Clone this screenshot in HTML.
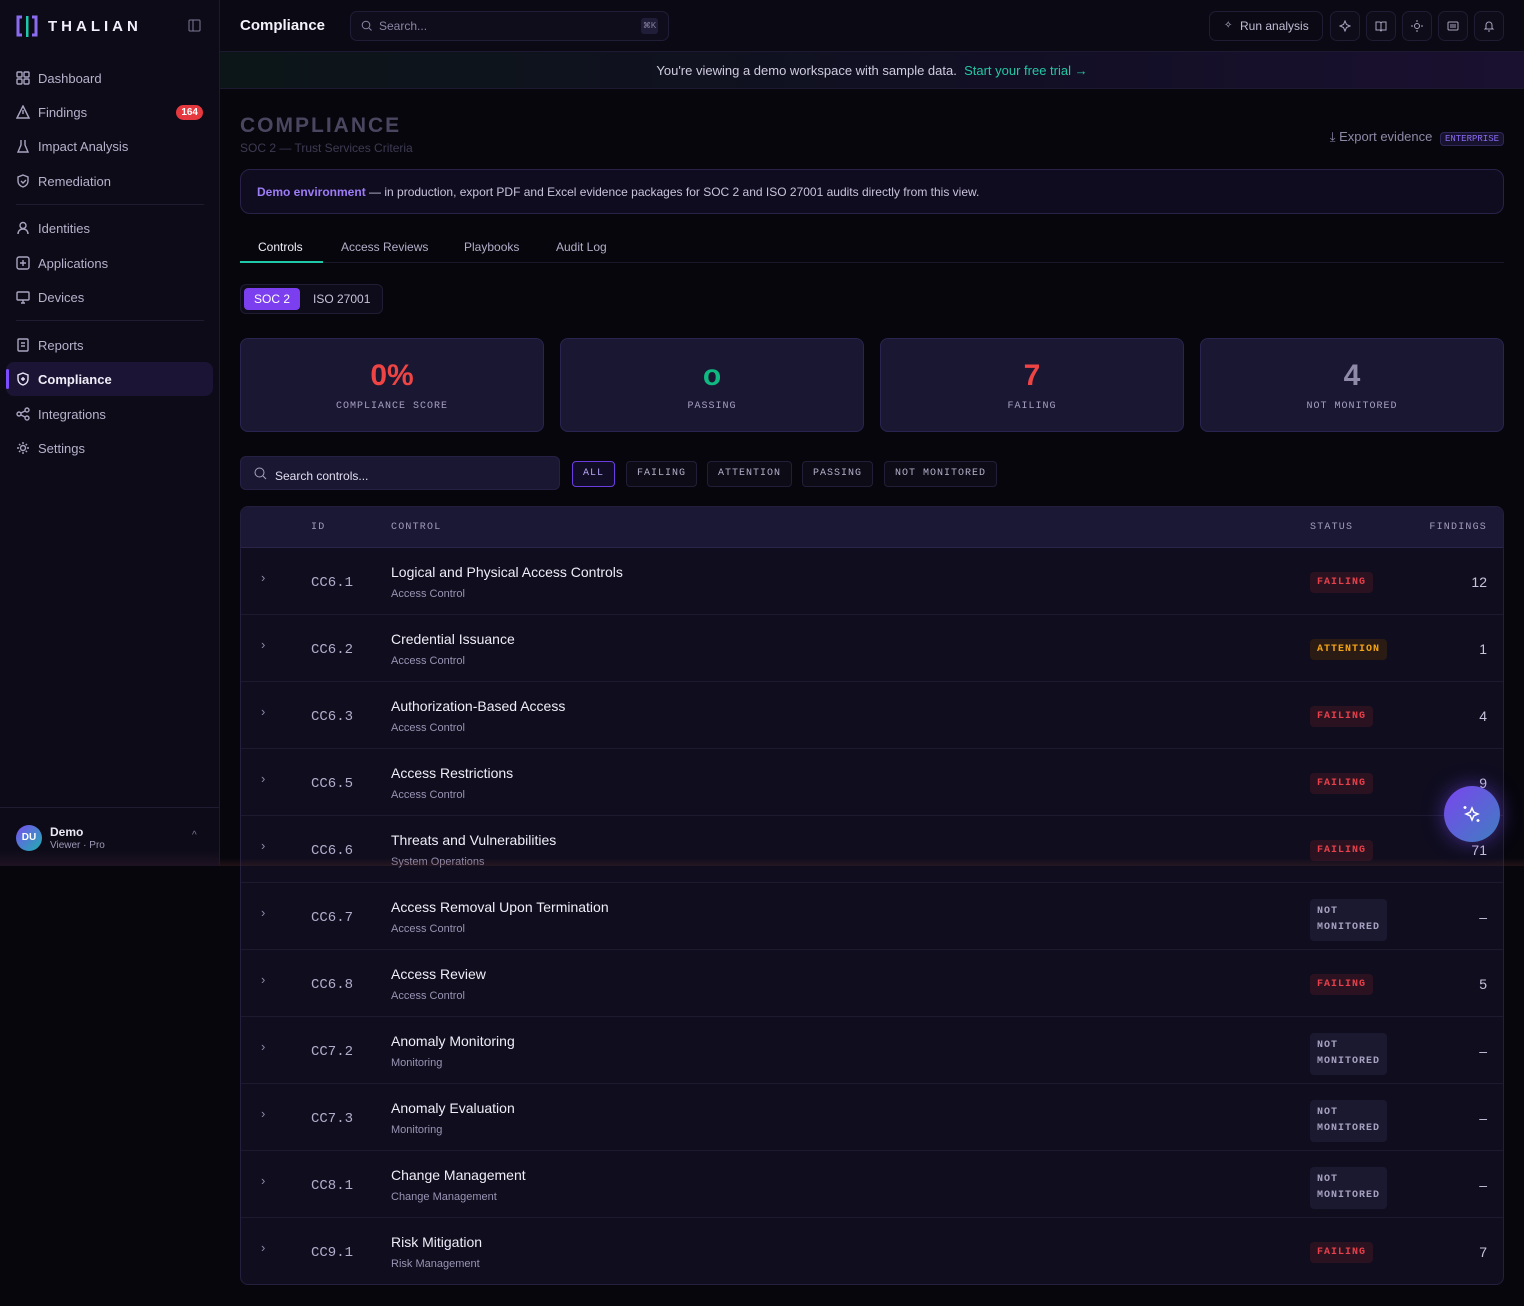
<!DOCTYPE html>
<html><head><meta charset="utf-8"><style>
*{box-sizing:border-box;margin:0;padding:0}
body{width:1524px;height:1306px;background:#07060d;font-family:"Liberation Sans",sans-serif;color:#d8d4ea;position:relative;overflow:hidden}
.mono{font-family:"Liberation Mono",monospace}
.side{position:absolute;left:0;top:0;width:220px;height:866px;background:#0d0b18;border-right:1px solid #1c1930}
.logo{position:absolute;left:16px;top:14px;height:24px;display:flex;align-items:center;gap:10px}
.logo b{font-size:15px;letter-spacing:4px;color:#f2f0fa}
.nav{position:absolute;left:6px;width:207px;height:34px;display:flex;align-items:center;padding-left:10px;font-size:13px;color:#b7b2cc;gap:8px}
.nav svg{width:14px;height:14px;stroke:#a9a4c0;fill:none;stroke-width:1.4}
.nav.act{background:#1c1434;border-radius:8px;color:#f1eef9;font-weight:bold}
.nav.act:before{content:"";position:absolute;left:0;top:7px;width:3px;height:20px;background:#7c4dff;border-radius:2px}
.sep{position:absolute;left:16px;width:188px;height:1px;background:#1f1c32}
.top{position:absolute;left:220px;top:0;right:0;height:52px;border-bottom:1px solid #1c1930;background:#0b0a14}
.banner{position:absolute;left:220px;top:52px;right:0;height:37px;background:linear-gradient(90deg,#0c1618,#120f24 60%,#1a1030);border-bottom:1px solid #1c1930;font-size:13px;color:#d0cce0;text-align:center;line-height:37px}
.ib{position:absolute;top:11px;width:30px;height:30px;border:1px solid #1f1c34;border-radius:7px;background:#0d0c18}
.card{position:absolute;top:338px;width:304px;height:94px;background:#1a1733;border:1px solid #2a2550;border-radius:8px;text-align:center}
.card .v{font-size:30px;font-weight:bold;margin-top:20px;height:36px}
.card .l{font-size:10px;letter-spacing:1px;color:#a6a0c0;margin-top:6px}
.chip{position:absolute;top:461px;height:26px;border:1px solid #221e38;border-radius:4px;font-size:10px;letter-spacing:1px;color:#b5b0cc;line-height:24px;padding:0 10px;background:#0c0b16}
.tbl{position:absolute;left:240px;top:506px;width:1264px;height:779px;border:1px solid #231f3c;border-radius:8px;overflow:hidden;background:#0f0d1e}
.th{height:41px;background:#1b1836;border-bottom:1px solid #2a2548;position:relative;font-size:10px;letter-spacing:1.2px;color:#a29dbb}
.th span{position:absolute;top:15px}
.row{height:67px;border-bottom:1px solid #1d1a30;position:relative}
.row .ch{position:absolute;left:20px;top:22px;color:#8e89a8;font-size:13px}
.row .id{position:absolute;left:70px;top:27px;font-size:14px;color:#b3adcc}
.row .n{position:absolute;left:150px;top:16px;font-size:14px;color:#f0edf8}
.row .c{position:absolute;left:150px;top:40px;font-size:11px;color:#9a94b4}
.row .s{position:absolute;left:1069px;top:24px;font-size:10px;letter-spacing:1px;border-radius:4px;padding:5px 7px;font-weight:bold}
.row .f{position:absolute;right:16px;top:26px;font-size:14px;color:#c8c3dc}
.fail{background:#2a1221;color:#e8404a}
.att{background:#2a1c14;color:#f4a416}
.nm{background:#1b1930;color:#a8a2c2;line-height:16px;top:16px!important}
</style></head><body>
<div class="side">
 <div class="logo"><svg width="22" height="22" viewBox="0 0 22 22"><path d="M6 2H2v18h4" stroke="#8b6cf0" stroke-width="3" fill="none"/><path d="M16 2h4v18h-4" stroke="#8b6cf0" stroke-width="3" fill="none"/><rect x="10" y="1" width="2.5" height="21" fill="#1ec8a8"/></svg><b>THALIAN</b></div>
 <svg style="position:absolute;left:188px;top:19px" width="13" height="13" viewBox="0 0 13 13" fill="none" stroke="#7d7898"><rect x="1" y="1" width="11" height="11" rx="1"/><path d="M5 1v11"/></svg>
 <div class="nav" style="top:61px"><svg viewBox="0 0 14 14"><rect x="1" y="1" width="5" height="5" rx="1"/><rect x="8" y="1" width="5" height="5" rx="1"/><rect x="1" y="8" width="5" height="5" rx="1"/><rect x="8" y="8" width="5" height="5" rx="1"/></svg>Dashboard</div>
 <div class="nav" style="top:95px"><svg viewBox="0 0 14 14"><path d="M7 1L13 13H1z M7 5v4"/></svg>Findings<span style="position:absolute;right:10px;background:#e5383f;color:#fff;font-size:10px;font-weight:bold;border-radius:8px;padding:2px 5px">164</span></div>
 <div class="nav" style="top:129px"><svg viewBox="0 0 14 14"><path d="M5 1v5L2 13h10L9 6V1"/></svg>Impact Analysis</div>
 <div class="nav" style="top:164px"><svg viewBox="0 0 14 14"><path d="M7 1l5 2v4c0 3-2 5-5 6-3-1-5-3-5-6V3z M5 7l2 2 3-3"/></svg>Remediation</div>
 <div class="sep" style="top:204px"></div>
 <div class="nav" style="top:211px"><svg viewBox="0 0 14 14"><circle cx="7" cy="4.5" r="3"/><path d="M2 13c0-3 2-5 5-5s5 2 5 5"/></svg>Identities</div>
 <div class="nav" style="top:246px"><svg viewBox="0 0 14 14"><rect x="1" y="1" width="12" height="12" rx="2"/><path d="M7 4v6M4 7h6"/></svg>Applications</div>
 <div class="nav" style="top:280px"><svg viewBox="0 0 14 14"><rect x="1" y="2" width="12" height="8" rx="1"/><path d="M5 13h4M7 10v3"/></svg>Devices</div>
 <div class="sep" style="top:320px"></div>
 <div class="nav" style="top:328px"><svg viewBox="0 0 14 14"><rect x="2" y="1" width="10" height="12" rx="1"/><path d="M5 5h4M5 8h4"/></svg>Reports</div>
 <div class="nav act" style="top:362px"><svg viewBox="0 0 14 14" style="stroke:#e8e4f4"><path d="M7 1l5 2v4c0 3-2 5-5 6-3-1-5-3-5-6V3z M7 5v4M5 7h4"/></svg>Compliance</div>
 <div class="nav" style="top:397px"><svg viewBox="0 0 14 14"><circle cx="3" cy="7" r="2"/><circle cx="11" cy="3" r="2"/><circle cx="11" cy="11" r="2"/><path d="M5 6l4-2M5 8l4 2"/></svg>Integrations</div>
 <div class="nav" style="top:431px"><svg viewBox="0 0 14 14"><circle cx="7" cy="7" r="2.5"/><path d="M7 1v2M7 11v2M1 7h2M11 7h2M3 3l1.3 1.3M9.7 9.7L11 11M3 11l1.3-1.3M9.7 4.3L11 3"/></svg>Settings</div>
 <div style="position:absolute;left:0;right:0;top:807px;height:1px;background:#1f1c32"></div>
 <div style="position:absolute;left:16px;top:825px;width:26px;height:26px;border-radius:50%;background:linear-gradient(135deg,#7a4ef0,#1eb0b0);color:#fff;font-size:10px;font-weight:bold;text-align:center;line-height:26px">DU</div>
 <div style="position:absolute;left:50px;top:825px;font-size:12px;font-weight:bold;color:#ece9f6">Demo</div>
 <div style="position:absolute;left:50px;top:840px;font-size:10px;color:#9e99b6">Viewer · Pro</div>
 <div style="position:absolute;left:192px;top:830px;font-size:10px;color:#7d7898">^</div>
 <div style="position:absolute;left:0;right:0;top:850px;height:16px;background:linear-gradient(180deg,transparent,#1e1222)"></div>
</div>
<div class="top">
 <div style="position:absolute;left:20px;top:17px;font-size:15px;font-weight:bold;color:#f4f2fb">Compliance</div>
 <div style="position:absolute;left:130px;top:11px;width:319px;height:30px;border:1px solid #201d36;border-radius:7px;background:#0f0d1c;font-size:12px;color:#8a85a3;line-height:28px;padding-left:28px">Search...
  <svg style="position:absolute;left:10px;top:8px" width="11" height="11" viewBox="0 0 11 11" fill="none" stroke="#8a85a3"><circle cx="5" cy="5" r="3.8"/><path d="M8 8l2.5 2.5"/></svg>
  <span style="position:absolute;right:10px;top:6px;height:16px;width:17px;background:#201d38;border-radius:3px;font-size:8px;line-height:16px;text-align:center">⌘K</span></div>
 <div style="position:absolute;left:989px;top:11px;width:114px;height:30px;border:1px solid #1f1c34;border-radius:7px;font-size:12px;color:#c0bbd4;line-height:28px;padding-left:30px"><span style="position:absolute;left:14px;font-size:10px">✧</span>Run analysis</div>
</div>
<div class="ib" style="left:1330px"></div><div class="ib" style="left:1366px"></div><div class="ib" style="left:1402px"></div><div class="ib" style="left:1438px"></div><div class="ib" style="left:1474px"></div>
<svg style="position:absolute;left:1339px;top:20px" width="12" height="12" fill="none" stroke="#a9a4c0"><path d="M6 1l1.5 3.5L11 6 7.5 7.5 6 11 4.5 7.5 1 6l3.5-1.5z"/></svg>
<svg style="position:absolute;left:1375px;top:20px" width="12" height="12" fill="none" stroke="#a9a4c0"><path d="M1 2h4l1 1 1-1h4v8H7l-1 1-1-1H1zM6 3v8"/></svg>
<svg style="position:absolute;left:1411px;top:20px" width="12" height="12" fill="none" stroke="#a9a4c0"><circle cx="6" cy="6" r="2.5"/><path d="M6 0v2M6 10v2M0 6h2M10 6h2"/></svg>
<svg style="position:absolute;left:1447px;top:20px" width="12" height="12" fill="none" stroke="#a9a4c0"><rect x="1" y="2" width="10" height="8" rx="1"/><path d="M3 5h6M3 7h6"/></svg>
<svg style="position:absolute;left:1483px;top:20px" width="12" height="12" fill="none" stroke="#a9a4c0"><path d="M3 8V5a3 3 0 016 0v3l1 1H2zM5 11h2"/></svg>
<div class="banner">You're viewing a demo workspace with sample data. &nbsp;<span style="color:#22c7a6">Start your free trial →</span></div>
<div style="position:absolute;left:240px;top:114px;font-size:21px;font-weight:bold;letter-spacing:2px;color:#4a4660">COMPLIANCE</div>
<div style="position:absolute;left:240px;top:141px;font-size:12px;color:#3e3b52">SOC 2 — Trust Services Criteria</div>
<div style="position:absolute;right:20px;top:129px;font-size:13px;color:#8e89a6;white-space:nowrap">⤓ Export evidence <span class="mono" style="font-size:9px;color:#8a6cf0;border:1px solid #2e2758;background:#17122e;border-radius:4px;padding:1px 4px;margin-left:4px">ENTERPRISE</span></div>
<div style="position:absolute;left:240px;top:169px;width:1264px;height:45px;border:1px solid #2a2148;border-radius:10px;background:#100c20;font-size:12px;color:#c8c3da;line-height:45px;padding-left:16px"><span style="color:#9d7cf7;font-weight:bold">Demo environment</span> — in production, export PDF and Excel evidence packages for SOC 2 and ISO 27001 audits directly from this view.</div>
<div style="position:absolute;left:240px;top:262px;width:1264px;height:1px;background:#1a1729"></div>
<div style="position:absolute;left:240px;top:261px;width:83px;height:2px;background:#1ec8a8"></div>
<div style="position:absolute;top:240px;left:258px;font-size:12px;color:#f0edf8">Controls</div>
<div style="position:absolute;top:240px;left:341px;font-size:12px;color:#b3aec8">Access Reviews</div>
<div style="position:absolute;top:240px;left:464px;font-size:12px;color:#b3aec8">Playbooks</div>
<div style="position:absolute;top:240px;left:556px;font-size:12px;color:#b3aec8">Audit Log</div>
<div style="position:absolute;left:240px;top:284px;width:143px;height:30px;border:1px solid #1f1c34;border-radius:6px;background:#0e0c1a"></div>
<div style="position:absolute;left:244px;top:288px;width:56px;height:22px;background:#7b3ff0;border-radius:4px;color:#fff;font-size:12px;text-align:center;line-height:22px">SOC 2</div>
<div style="position:absolute;left:313px;top:292px;font-size:12px;color:#c8c3da">ISO 27001</div>
<div class="card" style="left:240px"><div class="v" style="color:#ef4444">0%</div><div class="l mono">COMPLIANCE SCORE</div></div>
<div class="card" style="left:560px"><div class="v" style="color:#10b981">o</div><div class="l mono">PASSING</div></div>
<div class="card" style="left:880px"><div class="v" style="color:#ef4444">7</div><div class="l mono">FAILING</div></div>
<div class="card" style="left:1200px"><div class="v" style="color:#8f8aa8">4</div><div class="l mono">NOT MONITORED</div></div>
<div style="position:absolute;left:240px;top:456px;width:320px;height:34px;background:#1a1733;border:1px solid #262144;border-radius:6px;font-size:12px;color:#e0dcef;padding:12px 0 0 34px">Search controls...
<svg style="position:absolute;left:13px;top:10px" width="13" height="13" fill="none" stroke="#a9a4c0"><circle cx="5.5" cy="5.5" r="4.5"/><path d="M9 9l3 3"/></svg></div>
<div class="chip mono" style="left:572px;border-color:#6b3ce0;color:#b8a5f5;background:#120d26">ALL</div>
<div class="chip mono" style="left:626px">FAILING</div>
<div class="chip mono" style="left:707px">ATTENTION</div>
<div class="chip mono" style="left:802px">PASSING</div>
<div class="chip mono" style="left:884px">NOT MONITORED</div>
<div class="tbl">
 <div class="th mono"><span style="left:70px">ID</span><span style="left:150px">CONTROL</span><span style="left:1069px">STATUS</span><span style="right:16px">FINDINGS</span></div>
 <div class="row"><span class="ch">›</span><span class="id mono">CC6.1</span><span class="n">Logical and Physical Access Controls</span><span class="c">Access Control</span><span class="s mono fail">FAILING</span><span class="f">12</span></div>
 <div class="row"><span class="ch">›</span><span class="id mono">CC6.2</span><span class="n">Credential Issuance</span><span class="c">Access Control</span><span class="s mono att">ATTENTION</span><span class="f">1</span></div>
 <div class="row"><span class="ch">›</span><span class="id mono">CC6.3</span><span class="n">Authorization-Based Access</span><span class="c">Access Control</span><span class="s mono fail">FAILING</span><span class="f">4</span></div>
 <div class="row"><span class="ch">›</span><span class="id mono">CC6.5</span><span class="n">Access Restrictions</span><span class="c">Access Control</span><span class="s mono fail">FAILING</span><span class="f">9</span></div>
 <div class="row"><span class="ch">›</span><span class="id mono">CC6.6</span><span class="n">Threats and Vulnerabilities</span><span class="c">System Operations</span><span class="s mono fail">FAILING</span><span class="f">71</span></div>
 <div class="row"><span class="ch">›</span><span class="id mono">CC6.7</span><span class="n">Access Removal Upon Termination</span><span class="c">Access Control</span><span class="s mono nm">NOT<br>MONITORED</span><span class="f">–</span></div>
 <div class="row"><span class="ch">›</span><span class="id mono">CC6.8</span><span class="n">Access Review</span><span class="c">Access Control</span><span class="s mono fail">FAILING</span><span class="f">5</span></div>
 <div class="row"><span class="ch">›</span><span class="id mono">CC7.2</span><span class="n">Anomaly Monitoring</span><span class="c">Monitoring</span><span class="s mono nm">NOT<br>MONITORED</span><span class="f">–</span></div>
 <div class="row"><span class="ch">›</span><span class="id mono">CC7.3</span><span class="n">Anomaly Evaluation</span><span class="c">Monitoring</span><span class="s mono nm">NOT<br>MONITORED</span><span class="f">–</span></div>
 <div class="row"><span class="ch">›</span><span class="id mono">CC8.1</span><span class="n">Change Management</span><span class="c">Change Management</span><span class="s mono nm">NOT<br>MONITORED</span><span class="f">–</span></div>
 <div class="row" style="border:0"><span class="ch">›</span><span class="id mono">CC9.1</span><span class="n">Risk Mitigation</span><span class="c">Risk Management</span><span class="s mono fail">FAILING</span><span class="f">7</span></div>
</div>
<div style="position:absolute;left:220px;right:0;top:858px;height:8px;background:linear-gradient(180deg,transparent,rgba(80,40,40,.35))"></div>
<div style="position:absolute;left:1444px;top:786px;width:56px;height:56px;border-radius:50%;background:linear-gradient(135deg,#7a45ef,#3f7ec0);box-shadow:0 0 20px rgba(124,77,255,.5)">
<svg style="position:absolute;left:18px;top:18px" width="20" height="20" viewBox="0 0 20 20" fill="none" stroke="#fff" stroke-width="1.5"><path d="M10 4l1.8 4.2L16 10l-4.2 1.8L10 16l-1.8-4.2L4 10l4.2-1.8z"/><path d="M3 2v3M1.5 3.5h3M16 15v3M14.5 16.5h3"/></svg></div>
</body></html>
